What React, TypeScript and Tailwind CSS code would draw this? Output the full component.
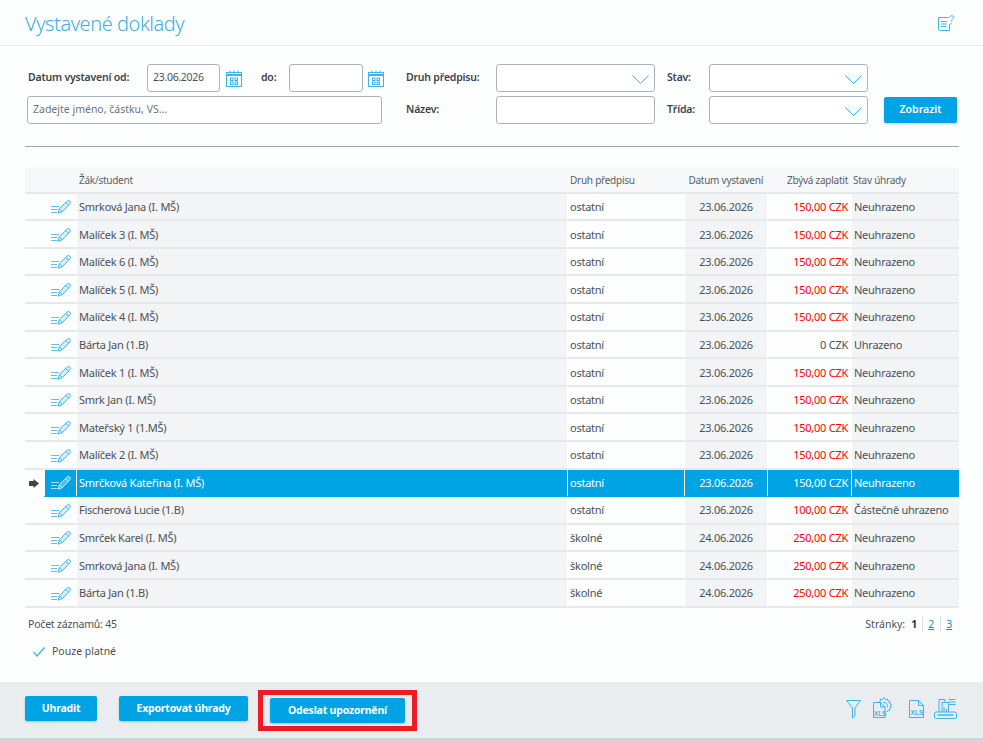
import React from "react";

const C = "#3fb4ec";

function RowIcon({ light }: { light?: boolean }) {
  const s = light ? "#cfeefc" : "#45b5ea";
  const f = light ? "#4dbdea" : "#d3effb";
  return (
    <svg width="20" height="14" viewBox="0 0 20 14" fill="none" stroke={s} strokeWidth="1">
      <path d="M0 6.500h8M0 9.500h6M0 12.500h6" strokeWidth="1.200" opacity="0.85" />
      <path d="M7 13.200l1.300-4.400L15.800 1.300c1-1 2.200-1 3 -.2s.8 2-.2 3L11.200 11.800z" fill={f} />
      <path d="M8.500 8.800l2.600 2.800M14.700 2.400l2.900 2.800" />
    </svg>
  );
}

function Calendar() {
  return (
    <svg width="16" height="17" viewBox="0 0 16 17" fill="none" stroke={C} strokeWidth="1">
      <rect x="0.500" y="2.500" width="15" height="14" />
      <path d="M0.500 5h15" strokeWidth="2" />
      <path d="M4 0.500v3M8 0.500v3M12 0.500v3" />
      <rect x="4.500" y="8" width="2.500" height="2.500" />
      <rect x="9" y="8" width="2.500" height="2.500" />
      <rect x="4.500" y="12" width="2.500" height="2.500" />
      <rect x="9" y="12" width="2.500" height="2.500" />
    </svg>
  );
}

function Chevron() {
  return (
    <svg width="17" height="9" viewBox="0 0 17 9" fill="none" stroke={C} strokeWidth="1" className="absolute right-[5px] top-[10px]">
      <path d="M0.300 0.300L8.500 8.500l8.200-8.200" />
    </svg>
  );
}

function HelpIcon() {
  return (
    <svg width="16" height="16" viewBox="0 0 16 16" fill="none" stroke={C} strokeWidth="1">
      <path d="M10.500 2.500H.5v12c0 .5.5 1 1 1h10V9" />
      <path d="M3 6.500h6M3 9h6M3 11.500h5" />
      <path d="M11.500 2.500c.2-2.300 4-2.500 4-.2 0 2-2.200 2-2.200 4.200M13.300 8v1.500" />
    </svg>
  );
}

function FilterIcon() {
  return (
    <svg width="15" height="19" viewBox="0 0 15 19" fill="none" stroke={C} strokeWidth="1">
      <path d="M0.500 0.500h14L9 8v8l-2.500 2V8z" />
    </svg>
  );
}

function XlsLabel({ x, y }: { x: number; y: number }) {
  return (
    <text x={x} y={y} fontSize="6.500" fontWeight="700" fontFamily="Liberation Sans, sans-serif" fill={C} stroke="none">
      XLS
    </text>
  );
}

function XlsGearIcon() {
  return (
    <svg width="21" height="21" viewBox="0 0 21 21" fill="none" stroke={C} strokeWidth="1">
      <path d="M.5 5.500h7l4.500 4.500v10.500H.5z" />
      <path d="M7.500 5.500V10H12" />
      <path d="M6 4.500l1.500-.5V2l2 .5L11 .5l1.500 2 2-.5.500 2 2 .5-.5 2 2 1-1.500 1.500 1.500 1.500-2 .8.300 2-2 .2-.5 1.500" />
      <path d="M10 5.500a3.500 3.500 0 0 1 4 5" />
      <XlsLabel x={.8} y={18.500} />
    </svg>
  );
}

function XlsIcon() {
  return (
    <svg width="15" height="18" viewBox="0 0 15 18" fill="none" stroke={C} strokeWidth="1">
      <path d="M.5 .5h9l5 5v12H.5z" />
      <path d="M9.500 .5v5h5" />
      <XlsLabel x={1.600} y={15} />
    </svg>
  );
}

function PrintIcon() {
  return (
    <svg width="23" height="21" viewBox="0 0 23 21" fill="none" stroke={C} strokeWidth="1">
      <path d="M5 14V1.500h6V4M8 14V4.500h6.500V14" />
      <path d="M14.500 1.500h7M14.500 4h7M14.500 6.500h7" />
      <path d="M10 9v5M12.500 11v3M10 6.500v.5" />
      <rect x="0.500" y="14" width="22" height="6.500" rx="1.500" />
      <path d="M3.500 17h16" strokeWidth="1.500" />
    </svg>
  );
}

const rows = [
  ["Smrková Jana (I. MŠ)", "ostatní", "23.06.2026", "150,00 CZK", "Neuhrazeno"],
  ["Malíček 3 (I. MŠ)", "ostatní", "23.06.2026", "150,00 CZK", "Neuhrazeno"],
  ["Malíček 6 (I. MŠ)", "ostatní", "23.06.2026", "150,00 CZK", "Neuhrazeno"],
  ["Malíček 5 (I. MŠ)", "ostatní", "23.06.2026", "150,00 CZK", "Neuhrazeno"],
  ["Malíček 4 (I. MŠ)", "ostatní", "23.06.2026", "150,00 CZK", "Neuhrazeno"],
  ["Bárta Jan (1.B)", "ostatní", "23.06.2026", "0 CZK", "Uhrazeno"],
  ["Malíček 1 (I. MŠ)", "ostatní", "23.06.2026", "150,00 CZK", "Neuhrazeno"],
  ["Smrk Jan (I. MŠ)", "ostatní", "23.06.2026", "150,00 CZK", "Neuhrazeno"],
  ["Mateřský 1 (1.MŠ)", "ostatní", "23.06.2026", "150,00 CZK", "Neuhrazeno"],
  ["Malíček 2 (I. MŠ)", "ostatní", "23.06.2026", "150,00 CZK", "Neuhrazeno"],
  ["Smrčková Kateřina (I. MŠ)", "ostatní", "23.06.2026", "150,00 CZK", "Neuhrazeno"],
  ["Fischerová Lucie (1.B)", "ostatní", "23.06.2026", "100,00 CZK", "Částečně uhrazeno"],
  ["Smrček Karel (I. MŠ)", "školné", "24.06.2026", "250,00 CZK", "Neuhrazeno"],
  ["Smrková Jana (I. MŠ)", "školné", "24.06.2026", "250,00 CZK", "Neuhrazeno"],
  ["Bárta Jan (1.B)", "školné", "24.06.2026", "250,00 CZK", "Neuhrazeno"],
];

const inputCls = "h-[28px] rounded-[3px] border border-[#a9b3b8] bg-white";
const labelCls = "text-[10.5px] font-semibold tracking-[-0.2px] text-[#3c4448] whitespace-nowrap";
const btnCls = "h-[25px] rounded-[2px] bg-[#00a3e3] text-[10.5px] text-white shadow-[0_1px_2px_rgba(0,0,0,0.2)]";
const footBtn = `${btnCls} font-bold tracking-[-0.2px]`;

export default function App() {
  return (
    <div className="flex h-[741px] w-[983px] flex-col overflow-hidden bg-[#fdfefe] font-['Noto_Sans',sans-serif] text-[#4a5256]">
      <header className="flex h-[46px] items-center justify-between border-b border-[#eceeef] pl-[25px] pr-[29px]">
        <h1 className="pt-[2px] text-[20px] font-light tracking-[-0.45px] text-[#3fade5]">Vystavené doklady</h1>
        <HelpIcon />
      </header>

      <section className="flex flex-col gap-[4px] pt-[18px]">
        <div className="flex h-[28px] items-center">
          <span className={`${labelCls} w-[147px] pl-[28px]`}>Datum vystavení od:</span>
          <div className={`${inputCls} flex w-[73px] items-center pl-[5px] text-[10.5px] tracking-[-0.3px]`}>23.06.2026</div>
          <span className="ml-[6px] w-[16px]"><Calendar /></span>
          <span className={`${labelCls} ml-[19px] w-[28px]`}>do:</span>
          <div className={`${inputCls} w-[74px]`} />
          <span className="ml-[5px] w-[16px]"><Calendar /></span>
          <span className={`${labelCls} ml-[22px] w-[90px]`}>Druh předpisu:</span>
          <div className={`${inputCls} relative w-[159px]`}><Chevron /></div>
          <span className={`${labelCls} ml-[12px] w-[42px]`}>Stav:</span>
          <div className={`${inputCls} relative w-[159px]`}><Chevron /></div>
        </div>
        <div className="flex h-[28px] items-center">
          <div className={`${inputCls} ml-[27px] flex w-[355px] items-center pl-[5px] text-[10.5px] text-[#6d7579]`}>Zadejte jméno, částku, VS...</div>
          <span className={`${labelCls} ml-[24px] w-[90px]`}>Název:</span>
          <div className={`${inputCls} w-[159px]`} />
          <span className={`${labelCls} ml-[12px] w-[42px]`}>Třída:</span>
          <div className={`${inputCls} relative w-[159px]`}><Chevron /></div>
          <button className={`${btnCls} ml-[16px] h-[26px] w-[73px] font-semibold`}>Zobrazit</button>
        </div>
      </section>

      <hr className="ml-[25px] mt-[22px] w-[934px] border-t border-[#a4a8aa]" />

      <div className="ml-[25px] mt-[20px] w-[934px]">
        <div className="grid h-[26.6px] grid-cols-[51px_491px_117px_83px_84px_108px] items-center border-b-2 border-[#e6e9ea] bg-[#f7f8f9] pt-[3px] text-[10px] tracking-[-0.25px] text-[#596166]">
          <span />
          <span className="pl-[3px]">Žák/student</span>
          <span className="pl-[3px]">Druh předpisu</span>
          <span className="whitespace-nowrap pr-[4px] text-right">Datum vystavení</span>
          <span className="whitespace-nowrap pr-[3px] text-right">Zbývá zaplatit</span>
          <span className="pl-[2px]">Stav úhrady</span>
        </div>
        {rows.map((r, i) => {
          const sel = i === 10;
          const plain = sel ? "border-b-2 border-b-transparent bg-[#00a3e3] pt-[1.6px]" : "border-b-2 border-b-[#e6e9ea] pt-[1.6px]";
          const alt = sel ? "border-b-2 border-b-transparent bg-[#00a3e3] pt-[1.6px]" : "border-b-2 border-b-[#e6e9ea] bg-[#f3f4f6] pt-[1.6px]";
          const amountColor = sel ? "text-white" : r[3] === "0 CZK" ? "text-[#4a5256]" : "text-[#ff0000]";
          return (
            <div key={i} className={`grid h-[27.6px] grid-cols-[19px_32px_491px_117px_83px_84px_108px] text-[11px] tracking-[-0.25px] ${sel ? "text-white" : ""}`}>
              <div className={`flex items-center justify-center pr-[1px] text-[#444] ${sel ? "" : "border-b-2 border-b-[#e6e9ea]"}`}>
                {sel && (
                  <svg width="10" height="9" viewBox="0 0 10 9" fill="#444"><path d="M0 2h4.500V0L10 4.500 4.500 9V7H0z" /></svg>
                )}
              </div>
              <div className={`flex items-center justify-end border-l border-l-white pr-[5px] ${plain}`}>
                <RowIcon light={sel} />
              </div>
              <div className={`flex items-center border-l border-l-white pl-[2px] ${alt}`}>{r[0]}</div>
              <div className={`flex items-center border-l border-l-white pl-[2px] ${plain}`}>{r[1]}</div>
              <div className={`flex items-center justify-center border-l border-l-white ${alt}`}>{r[2]}</div>
              <div className={`flex items-center justify-end border-l border-l-white pr-[3px] ${amountColor} ${plain}`}>{r[3]}</div>
              <div className={`flex items-center border-l border-l-white pl-[2px] ${alt}`}>{r[4]}</div>
            </div>
          );
        })}
      </div>

      <div className="mt-[9px] flex items-center justify-between pl-[28px] pr-[31px] text-[10.5px] tracking-[-0.2px]">
        <span>Počet záznamů: 45</span>
        <span className="flex items-center">
          <span className="tracking-normal">Stránky:</span>
          <b className="ml-[6px] w-[11px] text-[#333]">1</b>
          <a className="w-[18px] border-l border-[#dcdfe0] pl-[5px] text-[#0f8fcf] underline">2</a>
          <a className="border-l border-[#dcdfe0] pl-[5px] text-[#0f8fcf] underline">3</a>
        </span>
      </div>

      <div className="mt-[12px] flex items-center pl-[33px] text-[10.5px]">
        <svg width="12" height="10" viewBox="0 0 12 10" fill="none" stroke={C} strokeWidth="1.300"><path d="M0.500 5l3.500 4L11.500 0.500" /></svg>
        <span className="ml-[7px]">Pouze platné</span>
      </div>

      <footer className="mt-auto flex h-[59px] items-start border-b-[3px] border-[#cfd4d6] bg-[#e9edef] pl-[25px] pr-[26px]">
        <button className={`${footBtn} mt-[14px] w-[72px]`}>Uhradit</button>
        <button className={`${footBtn} ml-[22px] mt-[14px] w-[129px]`}>Exportovat úhrady</button>
        <div className="ml-[10px] mt-[8px] h-[41px] border-[5px] border-[#ed1c24] px-[7px] pt-[1px]">
          <button className={`${footBtn} w-[135px]`}>Odeslat upozornění</button>
        </div>
        <div className="ml-auto mt-[18px] flex items-start">
          <FilterIcon />
          <span className="-mt-[3px] ml-[12px]"><XlsGearIcon /></span>
          <span className="ml-[15px]"><XlsIcon /></span>
          <span className="-mt-[2px] ml-[10px]"><PrintIcon /></span>
        </div>
      </footer>
    </div>
  );
}
